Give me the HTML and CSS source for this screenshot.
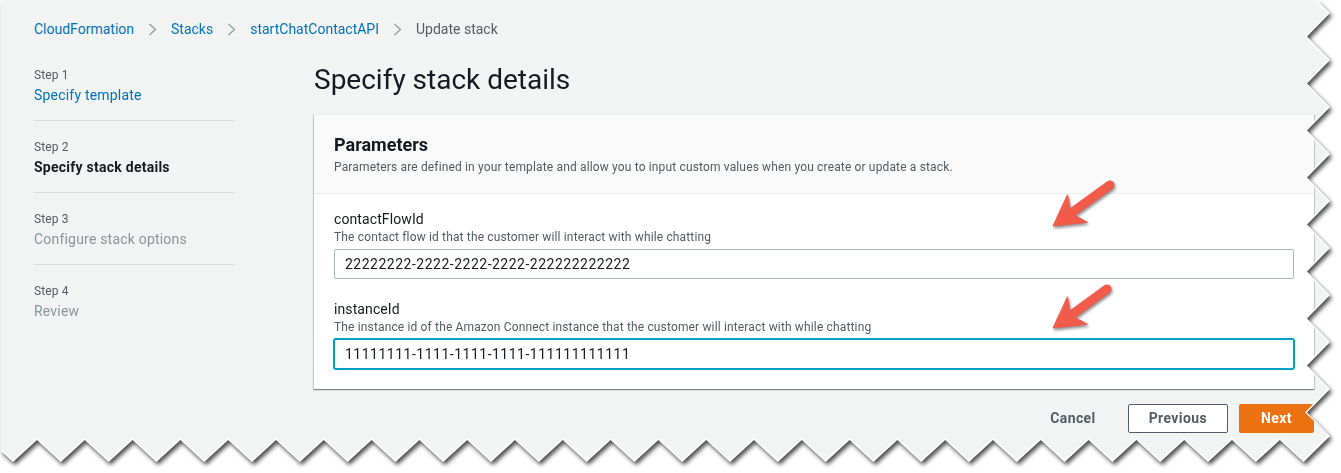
FILE: index.html
```html
<!DOCTYPE html>
<html lang="en">
<head>
<meta charset="utf-8">
<title>Update stack - CloudFormation</title>
<link rel="stylesheet" href="styles.css">
</head>
<body>
<div class="shadow">
  <div class="paper">
    <div class="page">
      <nav class="crumbs">
        <a href="#">CloudFormation</a>
        <svg class="sep" viewBox="0 0 9 13" aria-hidden="true"><polyline points="1.5,1 7.5,6.5 1.5,12"/></svg>
        <a href="#">Stacks</a>
        <svg class="sep" viewBox="0 0 9 13" aria-hidden="true"><polyline points="1.5,1 7.5,6.5 1.5,12"/></svg>
        <a href="#">startChatContactAPI</a>
        <svg class="sep" viewBox="0 0 9 13" aria-hidden="true"><polyline points="1.5,1 7.5,6.5 1.5,12"/></svg>
        <span class="current">Update stack</span>
      </nav>
      <div class="layout">
        <aside class="steps">
          <div class="step">
            <div class="step-label">Step 1</div>
            <a class="step-title link" href="#">Specify template</a>
          </div>
          <div class="step">
            <div class="step-label">Step 2</div>
            <div class="step-title active">Specify stack details</div>
          </div>
          <div class="step">
            <div class="step-label">Step 3</div>
            <div class="step-title disabled">Configure stack options</div>
          </div>
          <div class="step">
            <div class="step-label">Step 4</div>
            <div class="step-title disabled">Review</div>
          </div>
        </aside>
        <main class="content">
          <h1 class="title">Specify stack details</h1>
          <section class="card">
            <header class="card-head">
              <h2>Parameters</h2>
              <p>Parameters are defined in your template and allow you to input custom values when you create or update a stack.</p>
            </header>
            <div class="card-body">
              <div class="field">
                <label class="field-label" for="cf">contactFlowId</label>
                <div class="field-desc">The contact flow id that the customer will interact with while chatting</div>
                <input id="cf" class="input" type="text" value="22222222-2222-2222-2222-222222222222">
              </div>
              <div class="field">
                <label class="field-label" for="inst">instanceId</label>
                <div class="field-desc">The instance id of the Amazon Connect instance that the customer will interact with while chatting</div>
                <input id="inst" class="input focused" type="text" value="11111111-1111-1111-1111-111111111111">
              </div>
            </div>
          </section>
          <div class="actions">
            <button class="btn btn-link" type="button">Cancel</button>
            <button class="btn btn-normal" type="button">Previous</button>
            <button class="btn btn-primary" type="button">Next</button>
          </div>
        </main>
      </div>
      <svg class="arrows" viewBox="0 0 1341 473" aria-hidden="true">
        <g class="arrow">
          <line x1="1110" y1="185" x2="1074" y2="211"/>
          <polygon points="1053,226 1067.5,194.7 1070.9,213.2 1087.3,222.3"/>
        </g>
        <g class="arrow" transform="translate(0,102)">
          <line x1="1107" y1="187" x2="1074" y2="211"/>
          <polygon points="1053,226 1067.5,194.7 1070.9,213.2 1087.3,222.3"/>
        </g>
      </svg>
    </div>
  </div>
</div>
</body>
</html>
```
FILE: styles.css
```css
* { box-sizing: border-box; }

html, body {
  margin: 0;
  padding: 0;
  background: #ffffff;
}

body {
  font-family: Roboto, "Open Sans", "Liberation Sans", sans-serif;
  color: #16191f;
  width: 1341px;
  height: 473px;
  overflow: hidden;
}

.shadow {
  width: 1341px;
  height: 473px;
  filter: drop-shadow(2px 3px 2px rgba(0, 0, 0, 0.7));
}

.paper {
  width: 100%;
  height: 100%;
  background: #ffffff;
  clip-path: polygon(1px 1px, 1318px 1px,
    1330px 13px, 1307px 36.5px, 1330px 60px, 1307px 83.5px, 1330px 107px, 1307px 130.5px,
    1330px 154px, 1307px 177.5px, 1330px 201px, 1307px 224.5px, 1330px 248px, 1307px 271.5px,
    1330px 295px, 1307px 318.5px, 1330px 342px, 1307px 365.5px, 1330px 389px, 1307px 412.5px,
    1330px 436px,
    1303.6px 462px, 1279.8px 440px, 1255.8px 462px, 1232px 440px, 1208px 462px, 1184.2px 440px,
    1160.2px 462px, 1136.4px 440px, 1112.4px 462px, 1088.6px 440px, 1064.6px 462px, 1040.8px 440px,
    1016.8px 462px, 993px 440px, 969px 462px, 945.2px 440px, 921.2px 462px, 897.4px 440px,
    873.4px 462px, 849.6px 440px, 825.6px 462px, 801.8px 440px, 777.8px 462px, 754px 440px,
    730px 462px, 706.2px 440px, 682.2px 462px, 658.4px 440px, 634.4px 462px, 610.6px 440px,
    586.6px 462px, 562.8px 440px, 538.8px 462px, 515px 440px, 491px 462px, 467.2px 440px,
    443.2px 462px, 419.4px 440px, 395.4px 462px, 371.6px 440px, 347.6px 462px, 323.8px 440px,
    299.8px 462px, 276px 440px, 252px 462px, 228.2px 440px, 204.2px 462px, 180.4px 440px,
    156.4px 462px, 132.6px 440px, 108.6px 462px, 84.8px 440px, 60.8px 462px, 37px 440px,
    13px 462px, 1px 451px);
}

.page {
  position: relative;
  width: 100%;
  height: 100%;
  background: #f2f3f3;
  clip-path: polygon(1px 1px, 1316px 1px,
    1328px 13px, 1305px 36.5px, 1328px 60px, 1305px 83.5px, 1328px 107px, 1305px 130.5px,
    1328px 154px, 1305px 177.5px, 1328px 201px, 1305px 224.5px, 1328px 248px, 1305px 271.5px,
    1328px 295px, 1305px 318.5px, 1328px 342px, 1305px 365.5px, 1328px 389px, 1305px 412.5px,
    1328px 434px,
    1303.6px 460px, 1279.8px 438px, 1255.8px 460px, 1232px 438px, 1208px 460px, 1184.2px 438px,
    1160.2px 460px, 1136.4px 438px, 1112.4px 460px, 1088.6px 438px, 1064.6px 460px, 1040.8px 438px,
    1016.8px 460px, 993px 438px, 969px 460px, 945.2px 438px, 921.2px 460px, 897.4px 438px,
    873.4px 460px, 849.6px 438px, 825.6px 460px, 801.8px 438px, 777.8px 460px, 754px 438px,
    730px 460px, 706.2px 438px, 682.2px 460px, 658.4px 438px, 634.4px 460px, 610.6px 438px,
    586.6px 460px, 562.8px 438px, 538.8px 460px, 515px 438px, 491px 460px, 467.2px 438px,
    443.2px 460px, 419.4px 438px, 395.4px 460px, 371.6px 438px, 347.6px 460px, 323.8px 438px,
    299.8px 460px, 276px 438px, 252px 460px, 228.2px 438px, 204.2px 460px, 180.4px 438px,
    156.4px 460px, 132.6px 438px, 108.6px 460px, 84.8px 438px, 60.8px 460px, 37px 438px,
    13px 460px, 1px 449px);
}

/* Breadcrumbs */
.crumbs {
  display: flex;
  align-items: center;
  height: 39px;
  padding: 19px 0 0 34px;
  font-size: 14px;
  line-height: 20px;
}

.crumbs a {
  color: #0073bb;
  text-decoration: none;
}

.crumbs .current {
  color: #545b64;
}

.sep {
  width: 9px;
  height: 13px;
  margin: 0 14px;
  fill: none;
  stroke: #95a1a2;
  stroke-width: 1.4;
}

/* Layout */
.layout {
  display: grid;
  grid-template-columns: 200px 1000px;
  column-gap: 80px;
  padding: 23px 0 0 34px;
}

/* Steps */
.step {
  padding: 18px 0 15px;
  border-bottom: 1px solid #d5dbdb;
}

.step:first-child {
  padding-top: 5px;
}

.step:last-child {
  border-bottom: none;
}

.step-label {
  font-size: 12px;
  line-height: 16px;
  color: #545b64;
  margin-bottom: 2px;
  letter-spacing: 0.1px;
}

.step-title {
  display: block;
  font-size: 14px;
  line-height: 20px;
  text-decoration: none;
  letter-spacing: 0.2px;
}

.step-title.link { color: #0073bb; }
.step-title.active { color: #16191f; font-weight: 700; letter-spacing: 0.25px; }
.step-title.disabled { color: #879596; }

/* Content */
.title {
  margin: 0 0 16px;
  font-size: 28px;
  line-height: 36px;
  font-weight: 400;
  color: #16191f;
}

.card {
  background: #ffffff;
  box-shadow: 0 1px 1px 0 rgba(0, 28, 36, 0.3),
              1px 1px 1px 0 rgba(0, 28, 36, 0.15),
              -1px 1px 1px 0 rgba(0, 28, 36, 0.15);
  border-top: 1px solid #eaeded;
}

.card-head {
  background: #fafafa;
  padding: 19px 20px 18px;
  border-bottom: 1px solid #eaeded;
}

.card-head h2 {
  margin: 0;
  font-size: 18px;
  line-height: 22px;
  font-weight: 700;
  color: #16191f;
}

.card-head p {
  margin: 3px 0 0;
  font-size: 12px;
  line-height: 16px;
  color: #545b64;
  letter-spacing: 0.15px;
}

.card-body {
  padding: 15px 20px 20px;
}

.field + .field {
  margin-top: 20px;
}

.field-label {
  display: block;
  font-size: 14px;
  line-height: 20px;
  color: #16191f;
  letter-spacing: 0.1px;
}

.field-desc {
  font-size: 12px;
  line-height: 16px;
  color: #545b64;
  letter-spacing: 0.15px;
}

.input {
  display: block;
  width: 100%;
  height: 30px;
  margin-top: 4px;
  padding: 0 10px;
  border: 1px solid #aab7b8;
  border-radius: 2px;
  background: #ffffff;
  font-family: Roboto, "Open Sans", sans-serif;
  font-size: 14px;
  letter-spacing: 0.5px;
  color: #16191f;
  outline: none;
}

.input.focused {
  border-color: #00a1c9;
  box-shadow: 0 0 0 1px #00a1c9;
}

/* Actions */
.actions {
  display: flex;
  justify-content: flex-end;
  gap: 11px;
  margin-top: 15px;
}

.btn {
  height: 29px;
  padding: 0 20px;
  border: 1px solid transparent;
  border-radius: 2px;
  background: transparent;
  font-family: Roboto, "Open Sans", sans-serif;
  font-size: 14px;
  font-weight: 700;
  line-height: 27px;
  letter-spacing: 0.4px;
  color: #545b64;
}

.btn-normal {
  background: #ffffff;
  border-color: #545b64;
}

.btn-primary {
  background: #ec7211;
  border-color: #ec7211;
  color: #ffffff;
  padding: 0 21px;
}

/* Annotation arrows */
.arrows {
  position: absolute;
  left: 0;
  top: 0;
  width: 1341px;
  height: 473px;
  pointer-events: none;
  filter: drop-shadow(1px 2px 1.5px rgba(0, 0, 0, 0.45));
}

.arrow line {
  stroke: #f25a4a;
  stroke-width: 9;
  stroke-linecap: round;
}

.arrow polygon {
  fill: #f25a4a;
  stroke: #f25a4a;
  stroke-width: 1;
  stroke-linejoin: round;
}
```
